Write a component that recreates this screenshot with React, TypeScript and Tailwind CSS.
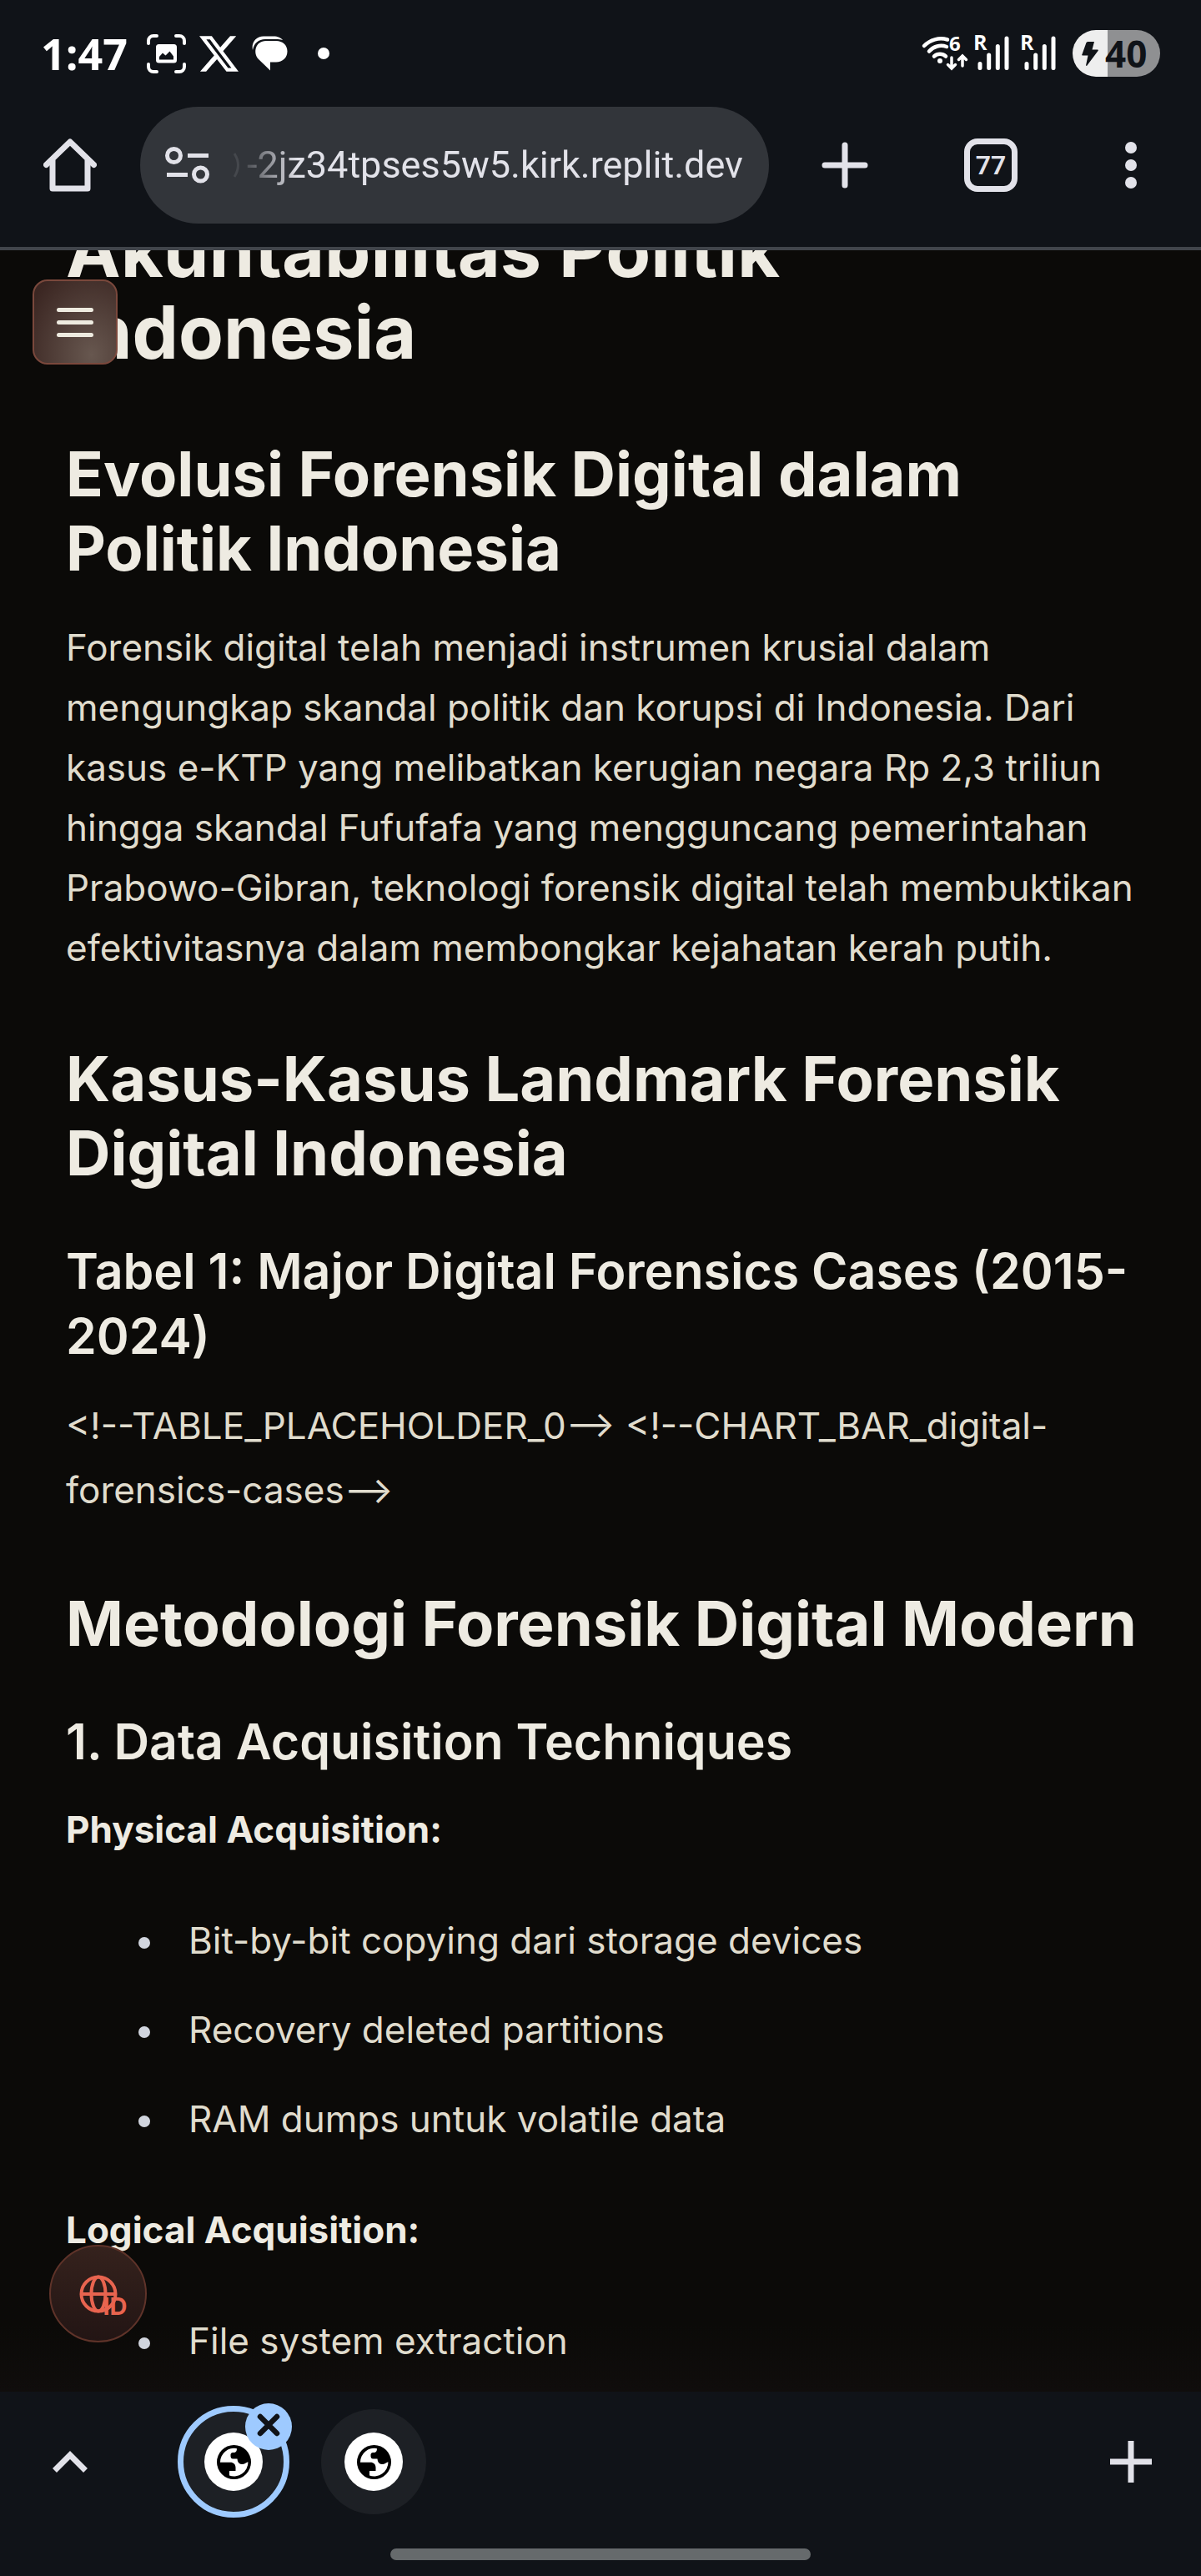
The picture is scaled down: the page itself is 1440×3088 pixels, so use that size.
import type { ReactNode } from "react";

const interStack = "font-['Inter',sans-serif]";

function ScreenshotIcon() {
  return (
    <svg viewBox="0 0 47 47" className="size-[47px]" fill="none" aria-hidden="true">
      <g stroke="#fff" strokeWidth="4" strokeLinecap="round">
        <path d="M2 11V8a6 6 0 0 1 6-6h4M35 2h4a6 6 0 0 1 6 6v3M45 36v3a6 6 0 0 1-6 6h-4M12 45H8a6 6 0 0 1-6-6v-3" />
      </g>
      <path
        fill="#fff"
        fillRule="evenodd"
        d="M14.500 12h18a3.500 3.500 0 0 1 3.500 3.500v15.500a3.500 3.500 0 0 1-3.500 3.500h-18a3.500 3.500 0 0 1-3.500-3.500V15.500a3.500 3.500 0 0 1 3.500-3.500zM15 30.500h17v-4l-4.500-6-5 5-3.500-3-4 4.500z"
      />
    </svg>
  );
}

function XLogo() {
  return (
    <svg viewBox="0 0 24 24" className="size-[47px]" fill="#fff" aria-hidden="true">
      <path d="M18.901 1.153h3.680l-8.040 9.190L24 22.846h-7.406l-5.800-7.584-6.638 7.584H.474l8.600-9.830L0 1.154h7.594l5.243 6.932ZM17.610 20.644h2.039L6.486 3.240H4.298Z" />
    </svg>
  );
}

function ChatIcon() {
  return (
    <svg viewBox="0 0 43 42" className="h-[42px] w-[43px]" fill="#fff" aria-hidden="true">
      <path d="M1 17C-1 8 5 .500 14 .500h12c5 0 9 2 11 4.500-3-.800-5-1-8-1H16C8 4 2.500 9 1 17z" />
      <path d="M17 6h12c8 0 13.500 5 13.500 12.500S37 31.500 29 31.500h-7v10L8 28C1 20.500 4 6 17 6z" />
    </svg>
  );
}

function WifiIcon() {
  return (
    <svg viewBox="0 0 56 42" className="h-[42px] w-14 overflow-visible" fill="none" aria-label="Wi-Fi 6">
      <g stroke="#fff" strokeWidth="4.500" strokeLinecap="round">
        <path d="M3 12A28 28 0 0 1 31 4.500" />
        <path d="M9 18.500A19 19 0 0 1 30 13" />
        <path d="M15 24.500a10.500 10.500 0 0 1 14 0" />
        <path strokeWidth="3.500" d="M36 26v12M31.500 34.500l4.500 4.500 4.500-4.500M49 36V25M44.500 28.500l4.500-4.500 4.500 4.500" />
      </g>
      <circle cx="22" cy="30" r="3" fill="#fff" />
      <text x="33" y="18" fontSize="24" fontWeight="700" fontFamily="Open Sans, sans-serif" fill="#fff">
        6
      </text>
    </svg>
  );
}

function SignalIcon() {
  return (
    <svg viewBox="0 0 42 44" className="h-11 w-[42px] overflow-visible" aria-label="Signal, roaming">
      <text x="-1" y="18" fontSize="25" fontWeight="700" fontFamily="Open Sans, sans-serif" fill="#fff">
        R
      </text>
      <path
        stroke="#fff"
        strokeWidth="5"
        strokeLinecap="round"
        d="M7 34.500v5M17.700 24v15.500M28.300 13.500v26M39 4v35.500"
      />
    </svg>
  );
}

function BoltIcon() {
  return (
    <svg viewBox="0 0 20 29" className="h-[29px] w-5" fill="#101318" aria-hidden="true">
      <path d="M7 0h8l-2.500 9.500H19c1 0 1 1 .500 1.500L6 29l-1-.500 2.500-12H1c-1 0-1-1-.500-1.500L5.500 1z" />
    </svg>
  );
}

function HomeIcon() {
  return (
    <svg viewBox="0 0 64 64" className="size-16" fill="none" stroke="#e2e2e9" strokeWidth="7" aria-hidden="true">
      <path strokeLinecap="round" strokeLinejoin="round" d="M3.500 31.500 32 4l28.500 27.500" />
      <path strokeLinejoin="round" d="M11 26v34h42V26" />
    </svg>
  );
}

function TuneIcon() {
  return (
    <svg viewBox="0 0 53 44" className="h-11 w-[53px]" fill="none" stroke="#e2e2e9" strokeWidth="5" aria-hidden="true">
      <circle cx="10.500" cy="10.500" r="8" />
      <path d="M27 10.500h25M2 33.500h25" />
      <circle cx="42.500" cy="33" r="8" />
    </svg>
  );
}

function PlusIcon({ rounded = false }: { rounded?: boolean }) {
  return rounded ? (
    <svg viewBox="0 0 56 56" className="size-14" stroke="#e2e2e9" strokeWidth="7" strokeLinecap="round" aria-hidden="true">
      <path d="M28 4v48M4 28h48" />
    </svg>
  ) : (
    <svg viewBox="0 0 50 50" className="size-[50px]" stroke="#e2e2e9" strokeWidth="7" aria-hidden="true">
      <path d="M25 0v50M0 25h50" />
    </svg>
  );
}

function EarthIcon() {
  return (
    <span className="flex size-[70px] items-center justify-center rounded-full bg-white">
      <svg viewBox="0 0 41 41" className="size-[41px]" aria-hidden="true">
        <circle cx="20.500" cy="20.500" r="20.500" fill="#000" />
        <path
          fill="#fff"
          d="M4 20.700A16.700 16.700 0 0 1 24 4.200C24 7 23 9 20 9c-3 0-3.500 1.500-3.500 3.500 0 2.500.500 4 3.500 4h4.500c.500 5 3 6.500 6 6.500 3.500 0 4.500-2.500 7-2.500A17 17 0 0 1 15 36.500V31h7.500v-4c0-4-2.500-6.300-6.500-6.300z"
        />
      </svg>
    </span>
  );
}

function GlobeIcon() {
  return (
    <svg viewBox="0 0 46 46" className="size-[46px]" fill="none" stroke="#e8644f" strokeWidth="4" aria-hidden="true">
      <circle cx="23" cy="23" r="20.500" />
      <ellipse cx="23" cy="23" rx="8.500" ry="20.500" />
      <path d="M2.500 23h41" />
    </svg>
  );
}

function Heading2({ children }: { children: ReactNode }) {
  return <h2 className="mt-[77px] text-[74px] leading-[89px] font-[650]">{children}</h2>;
}

function Label({ children, className }: { children: ReactNode; className: string }) {
  return <p className={`${className} text-[44px] leading-[77px] font-bold`}>{children}</p>;
}

function BulletList({ items }: { items: string[] }) {
  return (
    <ul className="mt-14 flex flex-col gap-[30px] pl-[87px] text-[44px] leading-[77px] text-[#e0dccd]">
      {items.map((item) => (
        <li key={item} className="flex items-center gap-[46px]">
          <span className="mt-1 size-[14px] shrink-0 rounded-full bg-[#d1d5de]" />
          {item}
        </li>
      ))}
    </ul>
  );
}

export default function App() {
  return (
    <div className={`${interStack} min-h-screen bg-[#0b0a08] text-[#eeebe2]`}>
      <header className="border-b-4 border-[#41454b] bg-[#101318]">
        <div className="flex h-32 items-center px-[49px]">
          <time className="font-['Open_Sans',sans-serif] text-[52px] leading-none font-bold text-white">1:47</time>
          <div className="ml-[23px] flex items-center gap-4">
            <ScreenshotIcon />
            <XLogo />
            <ChatIcon />
            <span className="ml-5 size-[14px] rounded-full bg-white" />
          </div>
          <div className="ml-auto flex items-center">
            <WifiIcon />
            <div className="ml-[7px] flex gap-[14px]">
              <SignalIcon />
              <SignalIcon />
            </div>
            <div className="ml-5 flex h-14 w-[105px] items-center gap-2 rounded-full bg-linear-to-r from-[#eeeeee] from-40% to-[#8f9092] to-40% pl-[11px] font-['Open_Sans',sans-serif] text-[44px] leading-none font-bold text-[#101318]">
              <BoltIcon />
              40
            </div>
          </div>
        </div>
        <div className="flex h-[168px] items-start">
          <button type="button" aria-label="Home" className="flex h-[140px] w-[168px] shrink-0 items-center justify-center">
            <HomeIcon />
          </button>
          <label className="flex h-[140px] min-w-0 flex-1 items-center rounded-full bg-[#32353a] pr-5 pl-[30px]">
            <TuneIcon />
            <svg viewBox="0 0 8 30" className="ml-[29px] h-[30px] w-2" fill="none" stroke="#45484d" strokeWidth="3" aria-hidden="true">
              <path d="M1 1q9 14 0 28" />
            </svg>
            <input
              type="text"
              aria-label="Address"
              defaultValue="-2jz34tpses5w5.kirk.replit.dev"
              className="ml-2 min-w-0 flex-1 mask-l-from-90% mask-l-to-102% bg-transparent font-['Roboto',sans-serif] text-[45px] leading-[60px] text-[#e2e2e9] outline-none"
            />
          </label>
          <button type="button" aria-label="New tab" className="flex h-[140px] w-[182px] shrink-0 items-center justify-center">
            <PlusIcon rounded />
          </button>
          <button type="button" aria-label="Open tabs" className="flex h-[140px] w-[168px] shrink-0 items-center justify-center">
            <span className="flex size-16 items-center justify-center rounded-2xl border-[7px] border-[#e2e2e9] font-['Roboto',sans-serif] text-[32px] leading-none font-semibold text-[#e2e2e9]">
              77
            </span>
          </button>
          <button type="button" aria-label="Menu" className="flex h-[140px] w-[168px] shrink-0 flex-col items-center justify-center gap-[7px]">
            <span className="size-[14px] rounded-full bg-[#e2e2e9]" />
            <span className="size-[14px] rounded-full bg-[#e2e2e9]" />
            <span className="size-[14px] rounded-full bg-[#e2e2e9]" />
          </button>
        </div>
      </header>

      <main className="relative overflow-hidden bg-linear-to-t from-[#100d0c] to-[#0b0a08] to-[80px] pr-[70px] pb-[22px] pl-[79px]">
        <h1 className="-mt-[49px] max-w-[1100px] text-[88px] leading-[98px] font-bold">Akuntabilitas Politik Indonesia</h1>

        <Heading2>Evolusi Forensik Digital dalam Politik Indonesia</Heading2>
        <p className="mt-[38px] text-[44px] leading-[72px] text-[#e0dccd]">
          Forensik digital telah menjadi instrumen krusial dalam mengungkap skandal politik dan korupsi di Indonesia. Dari
          kasus e-KTP yang melibatkan kerugian negara Rp 2,3 triliun hingga skandal Fufufafa yang mengguncang pemerintahan
          Prabowo-Gibran, teknologi forensik digital telah membuktikan efektivitasnya dalam membongkar kejahatan kerah
          putih.
        </p>

        <Heading2>Kasus-Kasus Landmark Forensik Digital Indonesia</Heading2>
        <h3 className="mt-[58px] text-[59px] leading-[78px] font-semibold">
          Tabel 1: Major Digital Forensics Cases (2015-2024)
        </h3>
        <p className="mt-[30px] text-[44px] leading-[77px] text-[#e0dccd]">
          {"<!--TABLE_PLACEHOLDER_0--> <!--CHART_BAR_digital-forensics-cases-->"}
        </p>

        <Heading2>Metodologi Forensik Digital Modern</Heading2>
        <h3 className="mt-[58px] text-[59px] leading-[78px] font-semibold">1. Data Acquisition Techniques</h3>
        <Label className="mt-7">Physical Acquisition:</Label>
        <BulletList
          items={["Bit-by-bit copying dari storage devices", "Recovery deleted partitions", "RAM dumps untuk volatile data"]}
        />
        <Label className="mt-14">Logical Acquisition:</Label>
        <BulletList items={["File system extraction"]} />

        <button
          type="button"
          aria-label="Open navigation"
          className="absolute top-[35px] left-[39px] flex h-[102px] w-[102px] flex-col items-center justify-center gap-[10px] rounded-[18px] border-2 border-[#7a483c] bg-radial-[at_70%_90%] from-[#67574f] to-[#3b2622] to-90%"
        >
          <span className="h-[5px] w-11 rounded-full bg-[#eeebe0]" />
          <span className="h-[5px] w-11 rounded-full bg-[#eeebe0]" />
          <span className="h-[5px] w-11 rounded-full bg-[#eeebe0]" />
        </button>
        <button
          type="button"
          aria-label="Language: ID"
          className="absolute bottom-[59px] left-[59px] flex size-[117px] items-center justify-center rounded-full border-2 border-[#5f3329] bg-linear-to-b from-[#35221d] to-[#231514]"
        >
          <span className="relative">
            <GlobeIcon />
            <span className="absolute -right-3 -bottom-1 text-[29px] leading-[25px] font-bold text-[#e8644f]">ID</span>
          </span>
        </button>
      </main>

      <footer className="flex flex-col items-center bg-[#101318] pb-[19px]">
        <div className="flex h-[168px] w-full items-center">
          <button type="button" aria-label="Expand tab strip" className="flex h-full w-[168px] items-center justify-center">
            <svg viewBox="0 0 42 26" className="h-[26px] w-[42px]" fill="none" stroke="#e2e2e9" strokeWidth="7" aria-hidden="true">
              <path d="M2.500 23.500 21 5l18.500 18.500" />
            </svg>
          </button>
          <div className="flex items-center gap-[38px] pl-[45px]">
            <div className="relative">
              <button
                type="button"
                aria-label="Current tab"
                className="flex size-[134px] items-center justify-center rounded-full border-[7px] border-[#9ecaff] bg-[#1d2025]"
              >
                <EarthIcon />
              </button>
              <button
                type="button"
                aria-label="Close tab"
                className="absolute -top-[3px] -right-[3px] flex size-14 items-center justify-center rounded-full bg-[#9ecaff]"
              >
                <svg viewBox="0 0 28 28" className="-mt-1 size-7" stroke="#101318" strokeWidth="6.500" strokeLinecap="round" aria-hidden="true">
                  <path d="m4 4 20 20M24 4 4 24" />
                </svg>
              </button>
            </div>
            <button type="button" aria-label="Second tab" className="flex size-[126px] items-center justify-center rounded-full bg-[#1d2025]">
              <EarthIcon />
            </button>
          </div>
          <button type="button" aria-label="Add tab" className="ml-auto flex h-full w-[168px] items-center justify-center">
            <PlusIcon />
          </button>
        </div>
        <div className="mt-5 h-[14px] w-[35%] rounded-full bg-[#666a6c]" />
      </footer>
    </div>
  );
}
